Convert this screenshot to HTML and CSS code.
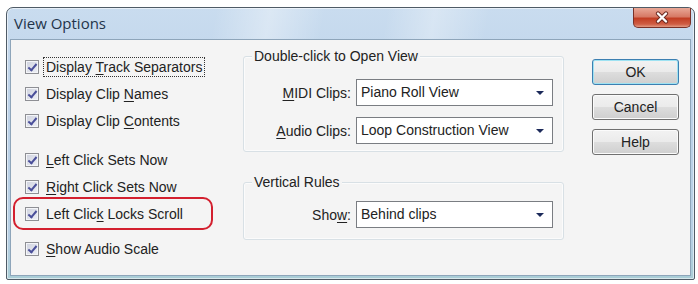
FILE: index.html
```html
<!DOCTYPE html>
<html lang="en">
<head>
    <meta charset="UTF-8">
    <title>View Options</title>
    <link rel="stylesheet" href="styles.css">
</head>
<body>
    <div class="window">
        <div class="titlebar">
            <span class="title">View Options</span>
        </div>
        <div class="close-btn">
            <svg width="18" height="13" viewBox="0 0 18 13">
                <path d="M5 2.5 L13 10.5 M13 2.5 L5 10.5" stroke="#6b2a22" stroke-width="4.2" stroke-linecap="round"/>
                <path d="M5 2.5 L13 10.5 M13 2.5 L5 10.5" stroke="#fff" stroke-width="2.4" stroke-linecap="round"/>
            </svg>
        </div>

        <div class="client">
            <div class="checks">
                <div class="check-row">
                    <span class="box"></span>
                    <span class="label focused">Display <u>T</u>rack Separators</span>
                </div>
                <div class="check-row">
                    <span class="box"></span>
                    <span class="label">Display Clip <u>N</u>ames</span>
                </div>
                <div class="check-row">
                    <span class="box"></span>
                    <span class="label">Display Clip <u>C</u>ontents</span>
                </div>
                <div class="check-row spaced">
                    <span class="box"></span>
                    <span class="label"><u>L</u>eft Click Sets Now</span>
                </div>
                <div class="check-row">
                    <span class="box"></span>
                    <span class="label"><u>R</u>ight Click Sets Now</span>
                </div>
                <div class="check-row">
                    <span class="box"></span>
                    <span class="label">Left Clic<u>k</u> Locks Scroll</span>
                </div>
                <div class="check-row spaced-small">
                    <span class="box"></span>
                    <span class="label"><u>S</u>how Audio Scale</span>
                </div>
            </div>

            <div class="groups">
                <div class="group group-open">
                    <span class="group-title">Double-click to Open View</span>
                    <div class="field">
                        <span class="field-label"><u>M</u>IDI Clips:</span>
                        <div class="combo">Piano Roll View<span class="arrow"></span></div>
                    </div>
                    <div class="field">
                        <span class="field-label"><u>A</u>udio Clips:</span>
                        <div class="combo">Loop Construction View<span class="arrow"></span></div>
                    </div>
                </div>
                <div class="group group-rules">
                    <span class="group-title">Vertical Rules</span>
                    <div class="field">
                        <span class="field-label">Sho<u>w</u>:</span>
                        <div class="combo">Behind clips<span class="arrow"></span></div>
                    </div>
                </div>
            </div>

            <div class="buttons">
                <button class="btn btn-default">OK</button>
                <button class="btn">Cancel</button>
                <button class="btn">Help</button>
            </div>

            <div class="highlight"></div>
        </div>
    </div>
</body>
</html>
```

FILE: styles.css
```css
body {
    margin: 0;
    background: #fff;
    font-family: "Liberation Sans", Arial, sans-serif;
    font-size: 14px;
    color: #222;
}
.window {
    position: relative;
    box-sizing: border-box;
    width: 689px;
    height: 273px;
    margin: 7px 0 0 6px;
    padding: 0 3px 3px 3px;
    display: flex;
    flex-direction: column;
    border: 1px solid #4f5b66;
    border-radius: 7px 7px 2px 2px;
    background: linear-gradient(to bottom, #c9dcef 0%, #bcd2e9 40%, #b6cfe4 85%, #a9cdd6 100%);
    box-shadow: inset 0 0 0 1px rgba(255, 255, 255, 0.55);
}
.titlebar {
    height: 31px;
    display: flex;
    align-items: center;
    padding: 0 0 2px 4px;
    box-sizing: border-box;
    background:
        linear-gradient(100deg, rgba(255,255,255,0) 30%, rgba(255,255,255,0.35) 38%, rgba(255,255,255,0) 46%,
            rgba(255,255,255,0) 55%, rgba(255,255,255,0.3) 62%, rgba(255,255,255,0) 70%);
}
.title {
    font-family: "Open Sans", "Noto Sans", sans-serif;
    font-size: 15px;
    color: #23344a;
}
.close-btn {
    position: absolute;
    top: 0;
    right: 3px;
    width: 58px;
    height: 20px;
    box-sizing: border-box;
    border: 1px solid #7a3128;
    border-top: none;
    border-radius: 0 0 5px 5px;
    background: linear-gradient(to bottom, #e9a897 0%, #d77a66 45%, #c23e24 55%, #cf5d44 85%, #e29a84 100%);
    display: flex;
    align-items: center;
    justify-content: center;
}
.client {
    position: relative;
    flex: 1;
    display: flex;
    border: 1px solid #8ea5ba;
    background: #f4f4f4;
}
.checks {
    width: 221px;
    box-sizing: border-box;
    padding: 20px 0 0 14px;
}
.check-row {
    display: flex;
    align-items: center;
    height: 14px;
    margin-top: 13px;
}
.check-row:first-child {
    margin-top: 0;
}
.check-row.spaced {
    margin-top: 25px;
}
.check-row.spaced-small {
    margin-top: 21px;
}
.box {
    position: relative;
    width: 14px;
    height: 14px;
    box-sizing: border-box;
    border: 1px solid #8e8f94;
    background: linear-gradient(135deg, #cfd2de, #eef0f6);
    box-shadow: inset 0 0 0 1px #f4f5f8;
    margin-right: 7px;
    flex: none;
}
.box::after {
    content: "";
    position: absolute;
    left: 4px;
    top: 1px;
    width: 3px;
    height: 7px;
    border-right: 2px solid #4a4f9a;
    border-bottom: 2px solid #4a4f9a;
    transform: rotate(40deg);
}
.label {
    line-height: 16px;
    white-space: nowrap;
}
.label.focused {
    outline: 1px dotted #333;
    outline-offset: 1px;
    padding: 0 1px;
    margin-left: -1px;
}
u {
    text-decoration-thickness: 1px;
    text-underline-offset: 2px;
}
.groups {
    width: 321px;
    margin-left: 11px;
    padding-top: 16px;
}
.group {
    position: relative;
    box-sizing: border-box;
    border: 1px solid #d8e0e5;
    border-radius: 3px;
    box-shadow: inset 0 0 0 1px #fbfbfb;
    padding-left: 6px;
}
.group-open {
    height: 96px;
    padding-top: 22px;
}
.group-rules {
    height: 58px;
    margin-top: 30px;
    padding-top: 18px;
}
.group-title {
    position: absolute;
    top: -9px;
    left: 8px;
    padding: 0 2px;
    background: #f4f4f4;
    line-height: 16px;
    white-space: nowrap;
}
.field {
    display: flex;
    align-items: center;
    margin-bottom: 11px;
}
.field-label {
    width: 101px;
    text-align: right;
    margin-right: 5px;
    white-space: nowrap;
}
.combo {
    position: relative;
    width: 197px;
    height: 27px;
    box-sizing: border-box;
    border: 1px solid #7a7d82;
    background: #fff;
    padding-left: 4px;
    line-height: 25px;
    white-space: nowrap;
}
.arrow {
    position: absolute;
    right: 8px;
    top: 11px;
    width: 0;
    height: 0;
    border-left: 4px solid transparent;
    border-right: 4px solid transparent;
    border-top: 4px solid #1c2a5a;
}
.buttons {
    display: flex;
    flex-direction: column;
    gap: 9px;
    margin-left: 28px;
    padding-top: 19px;
}
.btn {
    width: 87px;
    height: 26px;
    padding: 0;
    font-family: "Liberation Sans", Arial, sans-serif;
    font-size: 14px;
    color: #222;
    border: 1px solid #707070;
    border-radius: 3px;
    background: linear-gradient(to bottom, #f2f2f2 0%, #ebebeb 48%, #dddddd 52%, #cfcfcf 100%);
    box-shadow: inset 0 0 0 1px #fbfbfb;
}
.btn-default {
    border-color: #3c7fb1;
    box-shadow: inset 0 0 0 1px #9ee2f2;
}
.highlight {
    position: absolute;
    left: 2px;
    top: 157px;
    width: 200px;
    height: 33px;
    box-sizing: border-box;
    border: 2px solid #d3202f;
    border-radius: 10px;
}
```
